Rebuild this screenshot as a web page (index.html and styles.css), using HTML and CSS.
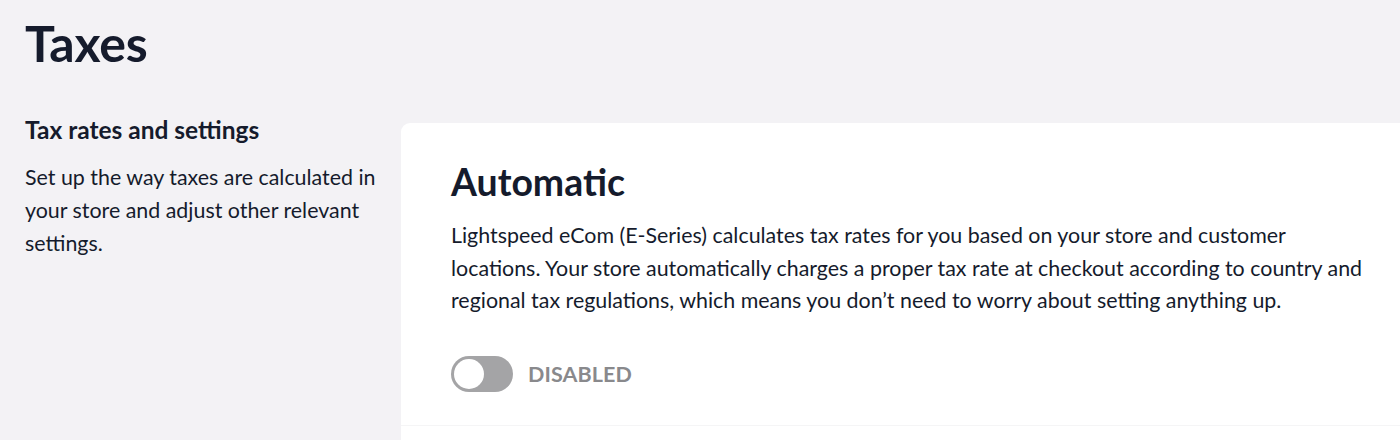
FILE: index.html
```html
<!DOCTYPE html>
<html lang="en">
<head>
<meta charset="utf-8">
<title>Taxes</title>
<link rel="stylesheet" href="styles.css">
</head>
<body>
<main class="page">
  <h1 class="page-title">Taxes</h1>
  <section class="settings-row">
    <div class="intro">
      <h2 class="intro-title">Tax rates and settings</h2>
      <p class="intro-text">Set up the way taxes are calculated in your store and adjust other relevant settings.</p>
    </div>
    <div class="card">
      <div class="card-body">
        <h3 class="card-title">Automatic</h3>
        <p class="card-text">Lightspeed eCom (E-Series) calculates tax rates for you based on your store and customer locations. Your store automatically charges a proper tax rate at checkout according to country and regional tax regulations, which means you don’t need to worry about setting anything up.</p>
        <div class="toggle-row">
          <span class="toggle"><span class="knob"></span></span>
          <span class="toggle-label">DISABLED</span>
        </div>
      </div>
      <div class="card-divider"></div>
    </div>
  </section>
</main>
</body>
</html>
```

FILE: styles.css
```css
html, body {
  margin: 0;
  padding: 0;
  overflow: hidden;
}
body {
  background: #f3f2f5;
  font-family: Lato, "Noto Sans", sans-serif;
  color: #151b2c;
  width: 1400px;
  height: 440px;
}
.page {
  padding: 0 0 0 25px;
}
.page-title {
  margin: 0;
  padding-top: 13px;
  font-size: 50px;
  font-weight: 700;
  line-height: 60px;
  letter-spacing: -0.2px;
}
.settings-row {
  display: grid;
  grid-template-columns: 376px 1040px;
  align-items: start;
  margin-top: 43px;
}
.intro-title {
  margin: 0;
  font-size: 24.5px;
  font-weight: 700;
  line-height: 28px;
}
.intro-text {
  margin: 17px 0 0;
  font-size: 21.4px;
  line-height: 33px;
  padding-right: 15px;
}
.card {
  margin-top: 7px;
  background: #ffffff;
  border-radius: 9px 0 0 0;
  height: 330px;
}
.card-body {
  padding: 35px 50px 0 50px;
}
.card-title {
  margin: 0;
  font-size: 37.4px;
  font-weight: 700;
  line-height: 48px;
}
.card-text {
  margin: 13px 0 0;
  font-size: 21.4px;
  line-height: 32.5px;
  width: 925px;
}
.toggle-row {
  display: flex;
  align-items: center;
  gap: 15px;
  margin-top: 39px;
}
.toggle {
  width: 62px;
  height: 36px;
  border-radius: 18px;
  background: #a4a4a6;
  box-sizing: border-box;
  padding: 3px;
  display: flex;
}
.knob {
  width: 30px;
  height: 30px;
  border-radius: 50%;
  background: #ffffff;
}
.toggle-label {
  font-size: 21.5px;
  font-weight: 700;
  color: #89898c;
  letter-spacing: 0.1px;
}
.card-divider {
  margin-top: 33px;
  border-top: 1px solid #f5f5f6;
}
```
